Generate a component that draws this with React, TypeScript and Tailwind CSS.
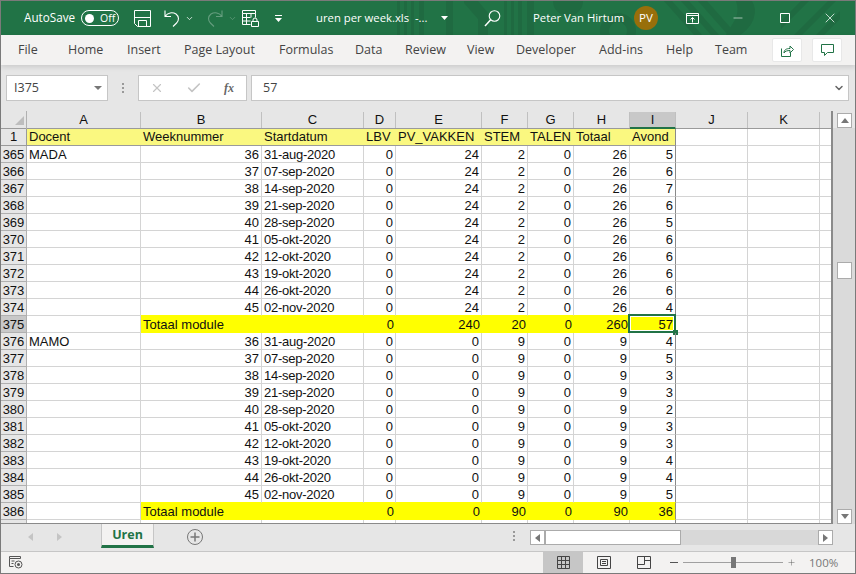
import { ChevronDown, Minus, Plus, Search, X, Check } from "lucide-react";

const GRID_COLS = "grid grid-cols-[26px_114px_121px_102px_32px_86px_46px_46px_56px_46px_72px_72px_13px]";
const COL_LETTERS = ["A", "B", "C", "D", "E", "F", "G", "H", "I", "J", "K"];
const TABS = [
  { name: "Home", width: "w-[59px]" },
  { name: "Insert", width: "w-[57px]" },
  { name: "Page Layout", width: "w-[95px]" },
  { name: "Formulas", width: "w-[76px]" },
  { name: "Data", width: "w-[50px]" },
  { name: "Review", width: "w-[62px]" },
  { name: "View", width: "w-[49px]" },
  { name: "Developer", width: "w-[83px]" },
  { name: "Add-ins", width: "w-[67px]" },
  { name: "Help", width: "w-[49px]" },
  { name: "Team", width: "w-[40px]" },
];
const DATES = ["31-aug-2020", "07-sep-2020", "14-sep-2020", "21-sep-2020", "28-sep-2020", "05-okt-2020", "12-okt-2020", "19-okt-2020", "26-okt-2020", "02-nov-2020"];
const TITLES = ["Docent", "Weeknummer", "Startdatum", "LBV", "PV_VAKKEN", "STEM", "TALEN", "Totaal", "Avond"];

type Row = {
  num: number;
  name?: string;
  week?: number;
  date?: string;
  values: number[];
  total?: boolean;
  beforeTotal?: boolean;
  selected?: boolean;
};

const madaEvening = [5, 6, 7, 6, 5, 6, 6, 6, 6, 4];
const mamoEvening = [4, 5, 3, 3, 2, 3, 3, 4, 4, 5];

const rows: Row[] = [
  ...madaEvening.map((v, i) => ({
    num: 365 + i,
    name: i === 0 ? "MADA" : undefined,
    week: 36 + i,
    date: DATES[i],
    values: [0, 24, 2, 0, 26, v],
    beforeTotal: i === 9,
  })),
  { num: 375, values: [0, 240, 20, 0, 260, 57], total: true, selected: true },
  ...mamoEvening.map((v, i) => ({
    num: 376 + i,
    name: i === 0 ? "MAMO" : undefined,
    week: 36 + i,
    date: DATES[i],
    values: [0, 0, 9, 0, 9, v],
    beforeTotal: i === 9,
  })),
  { num: 386, values: [0, 0, 90, 0, 90, 36], total: true },
];

function TitlePattern() {
  return (
    <svg className="absolute left-0 top-0 pointer-events-none" width="856" height="34" viewBox="0 0 856 34" fill="#1f6a41">
      <path d="M396 0h3v34h-3zM403 0h3v34h-3zM410 0h3v34h-3zM418 0h5v34h-5z" />
      <path d="M445 0h7v34h-7zM463 0h14l10 12v22h-10V18l-14-16z" />
      <path d="M503 0h3v34h-3zM510 0h3v34h-3zM517 0h4v34h-4zM526 0h7v34h-7z" />
      <path d="M552 0h30a15 15 0 0 1-30 0z" />
      <path d="M617 12a18 18 0 1 1-.1 0zm0 9a9 9 0 1 0 .1 0z" />
      <path d="M663 0h8l30 34h-8zM680 0h8l30 34h-8zM697 0h9l30 34h-9z" />
      <path d="M735 0h16a20 20 0 0 1 2 16c-2 8-8 14-14 18h-14l10-17c2-6 2-12 0-17z" />
      <path d="M780 20l20-20h8l-28 28zM793 34l34-34h8l-34 34zM815 34l24-24v8l-16 16z" />
    </svg>
  );
}

function TitleBar() {
  return (
    <div className="relative h-[34px] shrink-0 bg-[#217346] text-white flex items-center text-[11.3px]">
      <TitlePattern />
      <div className="relative flex items-center w-full h-full">
        <span className="ml-[23px] w-[57px] text-[11.7px]">AutoSave</span>
        <div className="w-[38px] h-[16px] rounded-full border border-white flex items-center pl-[3px] gap-[6px]">
          <span className="w-[9px] h-[9px] rounded-full bg-white" />
          <span className="text-[10.5px] leading-none">Off</span>
        </div>
        <svg className="ml-[15px]" width="17" height="17" viewBox="0 0 17 17" fill="none" stroke="white">
          <path d="M.5.5h16v16H3.500l-3-3zM.5 7.500h16M4.500 16.500v-6h8v6" />
        </svg>
        <svg className="ml-[13px]" width="16" height="18" viewBox="0 0 16 18" fill="none" stroke="white" strokeWidth="1.1">
          <path d="M1 1.500v6h6M1.300 7.200C3.500 3.600 8.500 2.800 12 5c3.400 2.600 3 6.600.6 9L9 17.500" />
        </svg>
        <ChevronDown className="ml-[5px]" size={9} strokeWidth={2} />
        <svg className="ml-[13px] opacity-30" width="16" height="18" viewBox="0 0 16 18" fill="none" stroke="white" strokeWidth="1.1">
          <path d="M15 1.500v6H9M14.700 7.200C12.500 3.600 7.500 2.800 4 5 .6 7.600 1 11.600 3.400 14L7 17.500" />
        </svg>
        <ChevronDown className="ml-[5px] opacity-30" size={9} strokeWidth={2} />
        <svg className="ml-[5px]" width="17" height="17" viewBox="0 0 17 17" fill="none" stroke="white">
          <path d="M.5.500h13v3H.5zM.5 3.500v11h8M.5 7.500h8M.5 11h8M4.500 3.500v11M9 3.500v4M13.500 3.500v4" />
          <path d="M9.500 11.500h7v5h-7zM11 11.500V10a2 2 0 0 1 4 0v1.500" />
        </svg>
        <svg className="ml-[15px]" width="9" height="9" viewBox="0 0 9 9" fill="white">
          <path d="M1 1h7v1H1zM1 4h7L4.500 8z" />
        </svg>
        <span className="ml-[33px] w-[125px] whitespace-nowrap">uren per week.xls&nbsp; -...</span>
        <svg width="7" height="4" viewBox="0 0 7 4" fill="white">
          <path d="M0 0h7L3.500 4z" />
        </svg>
        <svg className="ml-[36px]" width="17" height="17" viewBox="0 0 17 17" fill="none" stroke="white" strokeWidth="1.1">
          <circle cx="10.500" cy="6" r="5.300" />
          <path d="M6.700 9.800L1 16" strokeWidth="1.500" />
        </svg>
        <span className="ml-[32px] w-[101px] whitespace-nowrap">Peter Van Hirtum</span>
        <div className="w-[24px] h-[24px] rounded-full bg-[#986f0b] flex items-center justify-center text-[11.5px]">PV</div>
        <svg className="ml-[28px]" width="13" height="11" viewBox="0 0 13 11" fill="none" stroke="white">
          <path d="M.5.500h12v10H.5zM.5 2.500h12M6.500 9.500V4.500M4.500 6.500l2-2 2 2" />
        </svg>
        <Minus className="ml-[32px]" size={14} strokeWidth={1} />
        <svg className="ml-[35px]" width="10" height="10" viewBox="0 0 10 10" fill="none" stroke="white">
          <path d="M.5.500h9v9h-9z" />
        </svg>
        <X className="ml-[32px]" size={16} strokeWidth={1.1} />
      </div>
    </div>
  );
}

function RibbonTabs() {
  return (
    <div className="h-[30px] shrink-0 bg-[#f3f2f1] flex items-center text-[12.5px] text-[#444] relative z-10 shadow-[0_2px_5px_rgba(0,0,0,0.12)]">
      <span className="ml-[17px] w-[50px]">File</span>
      <div className="flex">
        {TABS.map((t) => (
          <span key={t.name} className={`whitespace-nowrap ${t.width}`}>{t.name}</span>
        ))}
      </div>
      <div className="ml-auto mr-[13px] flex gap-[10px]">
        <button className="w-[30px] h-[24px] bg-white rounded-[2px] border border-[#e8e8e8] flex items-center justify-center">
          <svg width="13" height="13" viewBox="0 0 13 13" fill="none" stroke="#217346">
            <path d="M.5 4.500v8h9v-4M3 9c0-3 2-4.500 6-4.500V2l3.500 3.500L9 9V6.500C6.500 6.500 4 7 3 9z" />
          </svg>
        </button>
        <button className="w-[30px] h-[24px] bg-white rounded-[2px] border border-[#e8e8e8] flex items-center justify-center">
          <svg width="13" height="12" viewBox="0 0 13 12" fill="none" stroke="#217346">
            <path d="M.5.500h12v8H6.500l-3 3v-3h-3z" />
          </svg>
        </button>
      </div>
    </div>
  );
}

function FormulaBar() {
  return (
    <div className="h-[46px] shrink-0 bg-[#e6e6e6] flex items-start pt-[10px] pl-[5px] text-[12.5px] text-[#444]">
      <div className="w-[102px] h-[26px] bg-white border border-[#c6c6c6] flex items-center pl-[7px] pr-[5px]">
        <span>I375</span>
        <svg className="ml-auto" width="8" height="4" viewBox="0 0 8 4" fill="#777">
          <path d="M0 0h8L4 4z" />
        </svg>
      </div>
      <div className="w-[30px] h-[26px] flex flex-col items-center justify-center gap-[2px]">
        <span className="w-[2px] h-[2px] bg-[#999]" />
        <span className="w-[2px] h-[2px] bg-[#999]" />
        <span className="w-[2px] h-[2px] bg-[#999]" />
      </div>
      <div className="w-[109px] h-[26px] bg-white border border-[#c6c6c6] flex items-center pl-[11px]">
        <X size={14} strokeWidth={2} className="text-[#c4c4c4]" />
        <Check size={16} strokeWidth={2.4} className="ml-[22px] text-[#c4c4c4]" />
        <span className="ml-[22px] italic text-[12px] font-bold text-[#666] [font-family:'Liberation_Serif',serif]">fx</span>
      </div>
      <div className="ml-[4px] w-[598px] h-[26px] bg-white border border-[#c6c6c6] flex items-center pl-[11px] pr-[3px]">
        <span>57</span>
        <ChevronDown className="ml-auto text-[#666]" size={12} strokeWidth={3} />
      </div>
    </div>
  );
}

function Cell({ text, right, fill, last, lineBelow, sel, tight }: { text?: string | number; right?: boolean; fill?: boolean; last?: boolean; lineBelow?: string; sel?: boolean; tight?: boolean }) {
  return (
    <div
      className={`relative h-[17px] leading-[18px] whitespace-nowrap border-b ${lineBelow ?? "border-b-[#d4d4d4]"} ${
        last ? "border-r border-r-[#8a8a8a]" : fill ? "" : "border-r border-r-[#d4d4d4]"
      } ${fill ? "bg-[#ffff00]" : ""} ${right ? "text-right pr-[2px]" : "pl-[2px]"} ${tight ? "tracking-[-0.25px]" : ""}`}
    >
      {text}
      {sel && (
        <>
          <span className="absolute -left-[2px] -top-[2px] -right-[1px] bottom-[-1px] border-2 border-[#217346] shadow-[inset_0_0_0_1px_white]" />
          <span className="absolute right-[-3px] bottom-[-3px] w-[5px] h-[5px] bg-[#217346]" />
        </>
      )}
    </div>
  );
}

function RowHead({ n, active }: { n: number; active?: boolean }) {
  return (
    <div className={`h-[17px] leading-[18px] text-center border-r border-b border-[#b0b0b0] ${active ? "bg-[#c8c8c8]" : "bg-[#e6e6e6]"}`}>
      {n}
    </div>
  );
}

function Blank() {
  return (
    <>
      <div className="h-[17px] border-r border-b border-[#d4d4d4]" />
      <div className="h-[17px] border-r border-b border-[#d4d4d4]" />
      <div className="h-[17px] border-b border-[#d4d4d4]" />
    </>
  );
}

function Sheet() {
  return (
    <div className="relative w-[832px] h-[413px] overflow-hidden border-b border-[#8a8a8a] border-r-2 border-r-[#8a8a8a] text-[13px] text-[#111] [font-family:'Liberation_Sans',Arial,sans-serif] bg-white">
      {/* column letters */}
      <div className={`${GRID_COLS} h-[18px] bg-[#e6e6e6] border-b border-[#9a9a9a]`}>
        <div className="relative border-r border-[#b0b0b0]">
          <svg className="absolute left-[14px] top-[5px]" width="9" height="9" viewBox="0 0 9 9" fill="#bdbdbd">
            <path d="M9 0v9H0z" />
          </svg>
        </div>
        {COL_LETTERS.map((c) => (
          <div
            key={c}
            className={`text-center leading-[16px] border-r border-[#c0c0c0] mt-[1px] h-[16px] ${c === "I" ? "bg-[#c8c8c8] border-b-2 border-b-[#217346] h-[17px]" : ""}`}
          >
            {c}
          </div>
        ))}
        <div />
      </div>
      {/* table head, row 1 */}
      <div className={GRID_COLS}>
        <div className="h-[17px] leading-[16px] text-center border-r border-b border-[#9a9a9a] bg-[#e6e6e6]">1</div>
        {TITLES.map((t, i) => (
          <div
            key={t}
            className={`h-[17px] leading-[16px] pl-[2px] whitespace-nowrap bg-[#faf880] border-b border-b-[#9a9a9a] ${i === 8 ? "border-r border-r-[#8a8a8a]" : ""}`}
          >
            {t}
          </div>
        ))}
        <Blank />
      </div>
      {rows.map((r) => (
        <div key={r.num} className={GRID_COLS}>
          <RowHead n={r.num} active={r.selected} />
          <Cell text={r.name} />
          {r.total ? (
            <>
              <Cell text="Totaal module" fill lineBelow="border-b-[#ffff00]" />
              <Cell fill lineBelow="border-b-[#ffff00]" />
            </>
          ) : (
            <>
              <Cell text={r.week} right lineBelow={r.beforeTotal ? "border-b-[#ffff00]" : undefined} />
              <Cell text={r.date} tight lineBelow={r.beforeTotal ? "border-b-[#ffff00]" : undefined} />
            </>
          )}
          {r.values.map((v, i) => (
            <Cell
              key={i}
              text={v}
              right
              fill={r.total}
              last={i === 5}
              sel={r.selected && i === 5}
              lineBelow={r.total || r.beforeTotal ? "border-b-[#ffff00]" : undefined}
            />
          ))}
          <Blank />
        </div>
      ))}
      {/* partly visible row under the last one */}
      <div className={GRID_COLS}>
        <div className="h-[17px] border-r border-[#b0b0b0] bg-[#e6e6e6]" />
        {[0, 1, 2, 3, 4, 5, 6, 7, 8, 9, 10].map((i) => (
          <div key={i} className={`h-[17px] border-r ${i === 8 ? "border-[#8a8a8a]" : "border-[#d4d4d4]"}`} />
        ))}
        <div />
      </div>
    </div>
  );
}

function ScrollButton({ dir }: { dir: "up" | "down" | "left" | "right" }) {
  const paths = { up: "M0 5h8L4 0z", down: "M0 0h8L4 5z", left: "M5 0v8L0 4z", right: "M0 0v8l5-4z" };
  return (
    <div className="w-[15px] h-[15px] bg-white border border-[#ababab] flex items-center justify-center shrink-0">
      <svg width="8" height="8" viewBox="0 0 8 8" fill="#777" className={dir === "up" || dir === "down" ? "mt-[2px]" : "ml-[2px]"}>
        <path d={paths[dir]} />
      </svg>
    </div>
  );
}

function VerticalScroll() {
  return (
    <div className="flex-1 flex flex-col bg-[#e6e6e6]">
      <div className="h-[17px] shrink-0 pl-[4px] pt-[2px]">
        <ScrollButton dir="up" />
      </div>
      <div className="flex-1 flex flex-col pl-[4px] bg-[#dadada]">
        <div className="h-[134px] shrink-0" />
        <div className="w-[15px] h-[17px] bg-white border border-[#ababab] shrink-0" />
        <div className="flex-1" />
        <ScrollButton dir="down" />
      </div>
    </div>
  );
}

function SheetTabs() {
  return (
    <div className="h-[28px] shrink-0 bg-[#e6e6e6] border-b border-[#c6c6c6] flex items-start">
      <svg className="ml-[27px] mt-[9px]" width="6" height="8" viewBox="0 0 6 8" fill="#c4c4c4">
        <path d="M5 0v8L0 4z" />
      </svg>
      <svg className="ml-[23px] mt-[9px]" width="6" height="8" viewBox="0 0 6 8" fill="#c4c4c4">
        <path d="M0 0v8l5-4z" />
      </svg>
      <div className="ml-[38px] w-[53px] h-[24px] pt-[2px] bg-[#f3f2f1] border-x border-[#c6c6c6] border-b-[3px] border-b-[#217346] flex justify-center items-center text-[12.5px] font-bold text-[#217346]">
        Uren
      </div>
      <svg className="ml-[33px] mt-[5px]" width="16" height="16" viewBox="0 0 16 16" fill="none" stroke="#777">
        <circle cx="8" cy="8" r="7.500" />
        <path d="M8 3.500v9M3.500 8h9" strokeWidth="1.500" />
      </svg>
      <div className="ml-[310px] mt-[7px] flex flex-col gap-[2px]">
        <span className="w-[2px] h-[2px] bg-[#999]" />
        <span className="w-[2px] h-[2px] bg-[#999]" />
        <span className="w-[2px] h-[2px] bg-[#999]" />
      </div>
      <div className="ml-[15px] mt-[6px] w-[303px] h-[15px] bg-[#d8d8d8] flex">
        <ScrollButton dir="left" />
        <div className="w-[136px] h-[15px] bg-white border border-[#ababab]" />
        <div className="flex-1" />
        <ScrollButton dir="right" />
      </div>
    </div>
  );
}

function StatusBar() {
  return (
    <div className="flex-1 bg-[#f3f2f1] flex items-stretch text-[12px] text-[#777]">
      <svg className="ml-[8px] mt-[4px]" width="14" height="13" viewBox="0 0 14 13" fill="none" stroke="#555">
        <path d="M.5.500h11v2H.5zM.5 2.500v8h4M2.500 5h3M2.500 7.500h2" />
        <circle cx="9.500" cy="8.500" r="3.500" />
        <circle cx="9.500" cy="8.500" r="1.500" fill="#555" stroke="none" />
      </svg>
      <div className="ml-[520px] w-[40px] bg-[#c6c6c6] flex items-center justify-center">
        <svg width="13" height="13" viewBox="0 0 13 13" fill="none" stroke="#444">
          <path d="M.5.500h12v12H.5zM4.500.500v12M8.500.500v12M.5 4.500h12M.5 8.500h12" />
        </svg>
      </div>
      <div className="ml-[14px] flex items-center">
        <svg width="14" height="13" viewBox="0 0 14 13" fill="none" stroke="#444">
          <path d="M.5.500h13v12H.5zM3.500 3.500h7v6h-7zM5 5.500h4M5 7.500h4" />
        </svg>
      </div>
      <div className="ml-[26px] flex items-center">
        <svg width="14" height="13" viewBox="0 0 14 13" fill="none" stroke="#444">
          <path d="M.5.500h13v12H.5zM.5 8.500h7v-8M7.500 4.500h6" />
        </svg>
      </div>
      <div className="ml-[19px] flex items-center">
        <span className="w-[8px] h-[1px] bg-[#555]" />
        <div className="relative ml-[5px] w-[100px] h-[1px] bg-[#a0a0a0]">
          <span className="absolute left-[48px] -top-[5px] w-[5px] h-[11px] bg-[#777]" />
        </div>
        <Plus className="ml-[4px] text-[#555]" size={9} strokeWidth={1.2} />
        <span className="ml-[13px] text-[11.5px]">100%</span>
      </div>
    </div>
  );
}

export default function App() {
  return (
    <div className="w-[856px] h-[574px] overflow-hidden flex flex-col border border-[#7a7a7a] bg-[#e6e6e6] [font-family:'Open_Sans',sans-serif]">
      <TitleBar />
      <RibbonTabs />
      <FormulaBar />
      <div className="flex h-[413px] shrink-0">
        <Sheet />
        <VerticalScroll />
      </div>
      <SheetTabs />
      <StatusBar />
    </div>
  );
}
